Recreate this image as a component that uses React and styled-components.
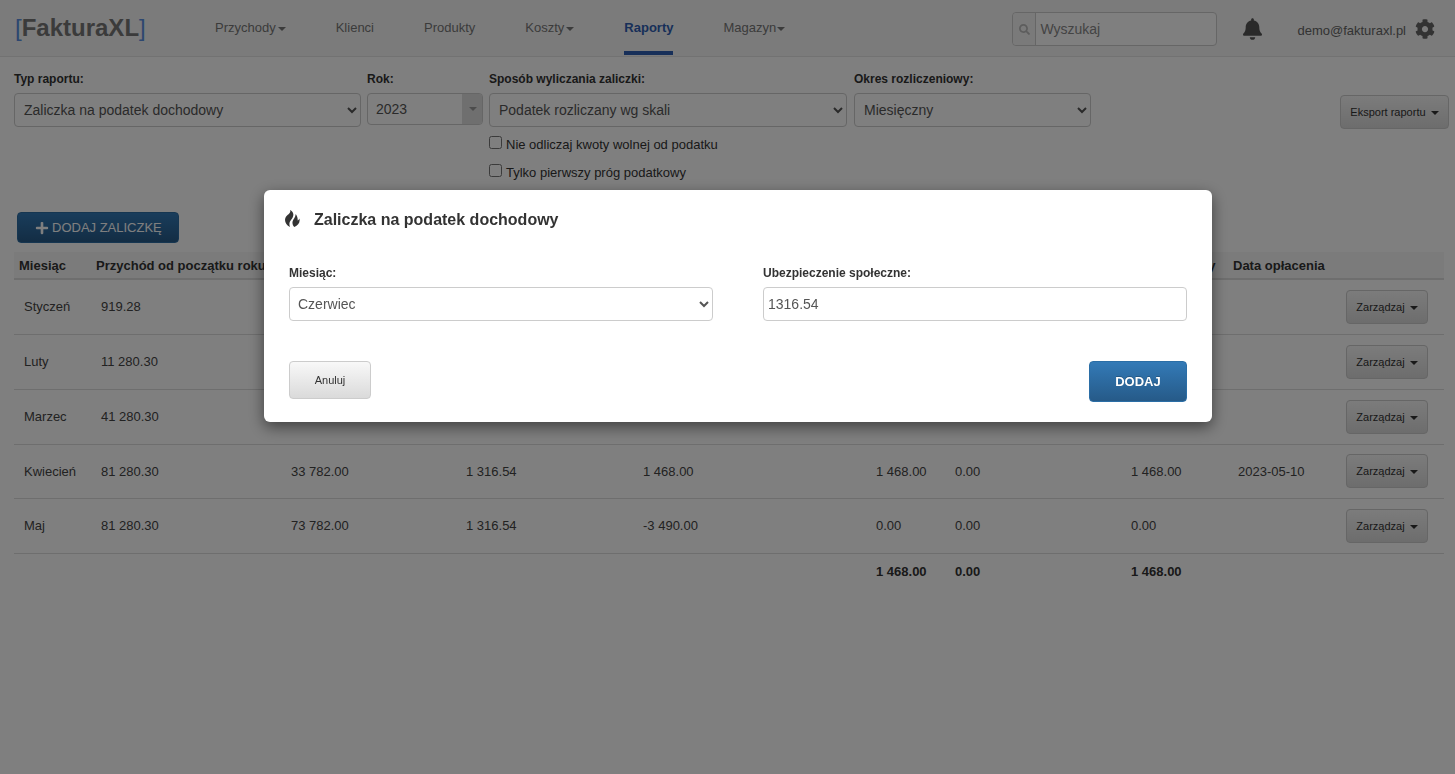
import React from 'react'
import styled, { createGlobalStyle } from 'styled-components'
import { FaBell, FaCog, FaSearch, FaPlus } from 'react-icons/fa'

const GlobalStyle = createGlobalStyle`
  html, body { margin: 0; padding: 0; height: 100%; overflow: hidden; background: #fff; }
  body { font-family: "Liberation Sans", Arial, sans-serif; font-size: 14px; color: #333; }
  * { box-sizing: border-box; }
`

const Header = styled.header`
  height: 57px;
  display: flex;
  align-items: flex-start;
  background: #f6f6f6;
  border-bottom: 1px solid #e4e4e4;
  padding-left: 15px;
`
const Logo = styled.a`
  width: 200px;
  font-size: 24px;
  font-weight: bold;
  line-height: 28px;
  margin-top: 14px;
  color: #777;
  span { color: #5a8fe0; font-weight: normal; }
`
const Nav = styled.nav`
  display: flex;
  gap: 50px;
  height: 55px;
`
const NavItem = styled.a`
  display: block;
  height: 55px;
  padding-top: 19px;
  font-size: 13px;
  line-height: 17px;
  color: ${p => (p.$active ? '#2f5fb3' : '#777')};
  font-weight: ${p => (p.$active ? 'bold' : 'normal')};
  border-bottom: 4px solid ${p => (p.$active ? '#2f5fb3' : 'transparent')};
`
const Caret = styled.i`
  display: inline-block;
  width: 0;
  height: 0;
  margin-left: ${p => p.$gap || 2}px;
  vertical-align: middle;
  border-top: 4px solid currentColor;
  border-left: 4px solid transparent;
  border-right: 4px solid transparent;
`
const HeaderRight = styled.div`
  margin-left: auto;
  display: flex;
  align-items: center;
  height: 56px;
  padding-top: 2px;
`
const Search = styled.div`
  width: 205px;
  height: 34px;
  display: flex;
  border: 1px solid #ccc;
  border-radius: 4px;
  background: #fff;
  margin-right: 26px;
`
const SearchIcon = styled.span`
  width: 23px;
  display: flex;
  align-items: center;
  justify-content: center;
  border-right: 1px solid #ccc;
  background: #f5f5f5;
  color: #bbb;
  font-size: 11px;
  border-radius: 4px 0 0 4px;
`
const SearchInput = styled.input`
  flex: 1;
  min-width: 0;
  border: 0;
  outline: 0;
  background: transparent;
  padding: 0 4px;
  font: 14px "Liberation Sans", Arial, sans-serif;
  &::placeholder { color: #888; opacity: 1; }
`
const BellIcon = styled(FaBell)`
  color: #555;
  margin-right: 35px;
  width: 19px;
  height: 22px;
`
const Email = styled.span`
  font-size: 13px;
  color: #666;
  margin-right: 9px;
  margin-top: 3px;
`
const GearIcon = styled(FaCog)`
  font-size: 20px;
  color: #666;
  margin-right: 20px;
`

const Main = styled.main`
  padding: 0 6px 0 14px;
`
const Filters = styled.div`
  display: flex;
  align-items: flex-start;
  height: 155px;
  padding-top: 15px;
`
const Field = styled.div`
  width: ${p => p.$w}px;
  margin-right: ${p => p.$mr || 6}px;
`
const Label = styled.label`
  display: block;
  font-size: 12px;
  font-weight: bold;
  line-height: 14px;
  margin-bottom: 7px;
  color: #333;
`
const Select = styled.select`
  display: block;
  width: 100%;
  height: 34px;
  padding: 6px 4px 6px ${p => p.$pl || 5}px;
  font: 14px "Liberation Sans", Arial, sans-serif;
  color: #555;
  background: #fff;
  border: 1px solid #ccc;
  border-radius: 4px;
`
const YearBox = styled.div`
  height: 32px;
  display: flex;
  align-items: center;
  justify-content: space-between;
  border: 1px solid #ccc;
  border-radius: 4px;
  background: #fff;
  color: #555;
  padding-left: 8px;
  overflow: hidden;
`
const YearArrow = styled.span`
  width: 20px;
  height: 100%;
  display: flex;
  align-items: center;
  justify-content: center;
  background: #dedede;
  color: #999;
`
const CheckRow = styled.label`
  display: flex;
  align-items: center;
  height: 28px;
  font-size: 13px;
  color: #333;
  select + & { margin-top: 3px; }
`
const Check = styled.input`
  margin: -3px 4px 0 0;
  width: 13px;
  height: 13px;
`
const GreyButton = styled.button`
  font: 11px "Liberation Sans", Arial, sans-serif;
  color: #333;
  background: linear-gradient(#f8f8f8, #dadada);
  border: 1px solid #ccc;
  border-radius: 4px;
  padding: 0;
  width: ${p => p.$w}px;
  height: ${p => p.$h}px;
`
const ExportButton = styled(GreyButton)`
  margin-left: auto;
  margin-top: 23px;
`
const AddButton = styled.button`
  display: flex;
  align-items: center;
  gap: 3px;
  width: 162px;
  height: 31px;
  margin-left: 3px;
  padding: 0 0 0 17px;
  border: 1px solid #2d6ca2;
  border-radius: 4px;
  background: linear-gradient(#337ab7, #265a88);
  color: #fff;
  font: 13px "Liberation Sans", Arial, sans-serif;
  white-space: nowrap;
  svg { font-size: 14px; }
`
const Table = styled.table`
  width: 1430px;
  margin-top: 9px;
  border-collapse: collapse;
  table-layout: fixed;
  font-size: 13px;
`
const Col = styled.col`
  width: ${p => p.$w}px;
`
const Th = styled.th`
  height: 27px;
  padding: 0 5px;
  text-align: left;
  font-size: 13px;
  font-weight: bold;
  color: #333;
  white-space: nowrap;
  background: #f7f7f7;
  border-bottom: 2px solid #ddd;
`
const Row = styled.tr`
  height: ${p => p.$h}px;
  border-bottom: 1px solid #ddd;
`
const Td = styled.td`
  padding: 0 10px;
  color: #444;
`
const Total = styled.td`
  padding: 0 10px;
  height: 36px;
  font-weight: bold;
  color: #333;
`
const RowEnd = styled.div`
  display: flex;
  align-items: center;
  justify-content: space-between;
  padding-right: 6px;
`
const ManageButton = styled(GreyButton)`
  display: block;
`

const Overlay = styled.div`
  position: fixed;
  inset: 0;
  background: rgba(0, 0, 0, 0.5);
  padding: 190px 0 0 264px;
`
const Modal = styled.div`
  width: 948px;
  height: 232px;
  background: #fff;
  border-radius: 6px;
  box-shadow: 0 5px 15px rgba(0, 0, 0, 0.5);
  padding: 0 25px;
`
const ModalTitle = styled.h4`
  display: flex;
  align-items: center;
  height: 59px;
  margin: 0 0 0 -5px;
  font-size: 16px;
  line-height: 18px;
  color: #333;
`
const FireIcon = styled.svg`
  width: 16px;
  height: 17px;
  margin-right: 14px;
  margin-top: -3px;
  fill: #333;
`
const ModalFields = styled.div`
  display: grid;
  grid-template-columns: 424px 424px;
  column-gap: 50px;
  padding-top: 17px;
`
const ModalActions = styled.div`
  display: flex;
  justify-content: space-between;
  align-items: flex-start;
  margin-top: 40px;
`
const Input = styled.input`
  display: block;
  width: 100%;
  height: 34px;
  padding: 0 4px;
  font: 14px "Liberation Sans", Arial, sans-serif;
  color: #555;
  border: 1px solid #ccc;
  border-radius: 4px;
`
const SubmitButton = styled.button`
  width: 98px;
  height: 41px;
  padding: 0;
  border: 1px solid #2b6ea6;
  border-radius: 4px;
  background: linear-gradient(#337ab7, #265a88);
  color: #fff;
  font: bold 13px "Liberation Sans", Arial, sans-serif;
  text-shadow: 0 -1px 0 rgba(0, 0, 0, 0.2);
`

const colWidths = [77, 190, 175, 177, 233, 79, 176, 107, 216]

const rows = [
  { m: 'Styczeń', a: '919.28', h: 55 },
  { m: 'Luty', a: '11 280.30', h: 55 },
  { m: 'Marzec', a: '41 280.30', h: 55 },
  { m: 'Kwiecień', a: '81 280.30', b: '33 782.00', c: '1 316.54', d: '1 468.00', e: '1 468.00', f: '0.00', g: '1 468.00', date: '2023-05-10', h: 54 },
  { m: 'Maj', a: '81 280.30', b: '73 782.00', c: '1 316.54', d: '-3 490.00', e: '0.00', f: '0.00', g: '0.00', h: 55 },
]

export default function App() {
  return (
    <>
      <GlobalStyle />
      <Header>
        <Logo><span>[</span>FakturaXL<span>]</span></Logo>
        <Nav>
          <NavItem>Przychody<Caret /></NavItem>
          <NavItem>Klienci</NavItem>
          <NavItem>Produkty</NavItem>
          <NavItem>Koszty<Caret /></NavItem>
          <NavItem $active>Raporty</NavItem>
          <NavItem>Magazyn<Caret $gap={1} /></NavItem>
        </Nav>
        <HeaderRight>
          <Search>
            <SearchIcon><FaSearch /></SearchIcon>
            <SearchInput placeholder="Wyszukaj" />
          </Search>
          <BellIcon />
          <Email>demo@fakturaxl.pl</Email>
          <GearIcon />
        </HeaderRight>
      </Header>
      <Main>
        <Filters>
          <Field $w={347}>
            <Label>Typ raportu:</Label>
            <Select defaultValue="a"><option value="a">Zaliczka na podatek dochodowy</option></Select>
          </Field>
          <Field $w={116}>
            <Label>Rok:</Label>
            <YearBox>2023<YearArrow><Caret $gap={0} /></YearArrow></YearBox>
          </Field>
          <Field $w={358} $mr={7}>
            <Label>Sposób wyliczania zaliczki:</Label>
            <Select defaultValue="a"><option value="a">Podatek rozliczany wg skali</option></Select>
            <CheckRow><Check type="checkbox" />Nie odliczaj kwoty wolnej od podatku</CheckRow>
            <CheckRow><Check type="checkbox" />Tylko pierwszy próg podatkowy</CheckRow>
          </Field>
          <Field $w={237}>
            <Label>Okres rozliczeniowy:</Label>
            <Select defaultValue="a"><option value="a">Miesięczny</option></Select>
          </Field>
          <ExportButton $w={109} $h={34}>Eksport raportu <Caret /></ExportButton>
        </Filters>
        <AddButton><FaPlus />DODAJ ZALICZKĘ</AddButton>
        <Table>
          <colgroup>
            {colWidths.map((w, i) => <Col key={i} $w={w} />)}
          </colgroup>
          <thead>
            <tr>
              <Th>Miesiąc</Th>
              <Th>Przychód od początku roku</Th>
              <Th />
              <Th />
              <Th />
              <Th />
              <Th />
              <Th>Razem zapłaty</Th>
              <Th>Data opłacenia</Th>
            </tr>
          </thead>
          <tbody>
            {rows.map(r => (
              <Row key={r.m} $h={r.h}>
                <Td>{r.m}</Td>
                <Td>{r.a}</Td>
                <Td>{r.b}</Td>
                <Td>{r.c}</Td>
                <Td>{r.d}</Td>
                <Td>{r.e}</Td>
                <Td>{r.f}</Td>
                <Td>{r.g}</Td>
                <Td>
                  <RowEnd>
                    <span>{r.date}</span>
                    <ManageButton $w={82} $h={34}>Zarządzaj <Caret /></ManageButton>
                  </RowEnd>
                </Td>
              </Row>
            ))}
            <tr>
              <Total colSpan={5} />
              <Total>1 468.00</Total>
              <Total>0.00</Total>
              <Total>1 468.00</Total>
              <Total />
            </tr>
          </tbody>
        </Table>
      </Main>
      <Overlay>
        <Modal>
          <ModalTitle>
            <FireIcon viewBox="0 0 16 17">
              <path d="M6 0c1.500 3-2.500 4.500-4.200 7-2 3.500 0 8 4.200 10-1-2.500-.8-5 1-7 1.800-2 3-4.500 2-7C8.500 1.800 7.400.7 6 0z" />
              <path d="M11.500 4c.5 3-2.300 5-2.900 7.400-.5 2.200.4 4.200 1.800 5.600 3.600-1.400 6-4.600 5-8.400-.4 1-1 1.800-1.800 2 .4-2.600-.6-5-2.100-6.600z" />
            </FireIcon>
            Zaliczka na podatek dochodowy
          </ModalTitle>
          <ModalFields>
            <div>
              <Label>Miesiąc:</Label>
              <Select $pl={4} defaultValue="6"><option value="6">Czerwiec</option></Select>
            </div>
            <div>
              <Label>Ubezpieczenie społeczne:</Label>
              <Input defaultValue="1316.54" />
            </div>
          </ModalFields>
          <ModalActions>
            <GreyButton $w={82} $h={38}>Anuluj</GreyButton>
            <SubmitButton>DODAJ</SubmitButton>
          </ModalActions>
        </Modal>
      </Overlay>
    </>
  )
}
